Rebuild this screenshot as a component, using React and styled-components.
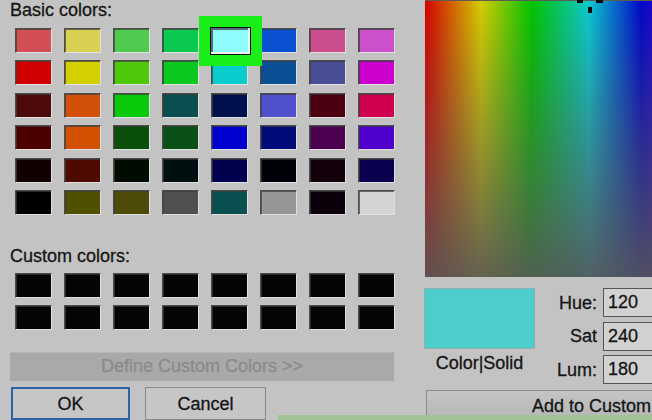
import React from 'react';
import styled, { createGlobalStyle } from 'styled-components';

const GlobalStyle = createGlobalStyle`
  *, *::before, *::after {
    box-sizing: border-box;
  }
  html, body {
    margin: 0;
    background: #c3c3c3;
    overflow: hidden;
    font-family: "Liberation Sans", Arial, sans-serif;
  }
`;

const basicColors = [
  '#d24f55', '#d8d052', '#4fca4f', '#0ac850', '#8cfcfc', '#0a50d0', '#cc4e8c', '#cc50cc',
  '#d20000', '#d4d000', '#50c80a', '#0ac81e', '#0acccc', '#0a5096', '#4a4e96', '#cc00cc',
  '#4c0a0a', '#d2500a', '#0ac80a', '#0a4e50', '#00104e', '#5050cc', '#4c0010', '#d00050',
  '#4c0000', '#d25000', '#0a500a', '#0a5014', '#0000d0', '#000a78', '#4c0050', '#5000cc',
  '#120000', '#4e0a00', '#000c00', '#001010', '#00004e', '#00000a', '#12000a', '#0a0050',
  '#000000', '#505000', '#4e4a0a', '#505050', '#0a5050', '#969696', '#0c000a', '#d4d4d4',
];

const SELECTED = 4;

const Page = styled.div`
  position: relative;
  display: flex;
  width: 652px;
  height: 420px;
  overflow: hidden;
  color: #151515;
  -webkit-text-stroke: 0.3px currentColor;
`;

const LeftPane = styled.div`
  flex: 0 0 420px;
  display: flex;
  flex-direction: column;
  padding-left: 10px;
`;

const Heading = styled.h2`
  margin: ${(p) => p.$top || 0}px 0 0 0;
  font-size: 18px;
  line-height: 20px;
  font-weight: normal;
`;

const SwatchGrid = styled.div`
  display: grid;
  grid-template-columns: repeat(8, 37px);
  grid-auto-rows: 25px;
  column-gap: 12px;
  row-gap: ${(p) => p.$gap}px;
  margin: ${(p) => p.$top}px 0 0 5px;
`;

const Swatch = styled.div`
  background: ${(p) => p.$color};
  border: 1px solid;
  border-color: #4c4c4c #e0e0e0 #e0e0e0 #4c4c4c;
  box-shadow: inset 1px 1px 0 rgba(60, 60, 60, 0.7);

  ${(p) =>
    p.$selected &&
    `
    position: relative;
    z-index: 1;
    margin: -1px -3px -2px -1px;
    border: 1px solid #0c0c0c;
    box-shadow: inset -2px -2px 0 #f2f2f2, inset 2px 2px 0 #4f7070, 0 0 0 11px #19ee19;
  `}
`;

const DefineButton = styled.div`
  display: flex;
  align-items: center;
  justify-content: center;
  width: 384px;
  height: 31px;
  margin-top: 21.5px;
  background: #a9a9a9;
  box-shadow: inset 0 1px 0 #b6b6b6;
  color: #8b8b8b;
  font-size: 18px;
  line-height: 20px;
`;

const ButtonRow = styled.div`
  display: flex;
  gap: 15px;
  margin: 6px 0 0 1px;
`;

const DialogButton = styled.div`
  display: flex;
  align-items: center;
  justify-content: center;
  flex: 0 0 ${(p) => p.$width}px;
  height: 33px;
  background: #c6c6c6;
  border: ${(p) => (p.$default ? '2px solid #2d62a6' : '1px solid #8a8a8a')};
  font-size: 18px;
  line-height: 20px;
`;

const RightPane = styled.div`
  flex: 0 0 232px;
  display: flex;
  flex-direction: column;
  padding-left: 4px;
  overflow: hidden;
`;

const Spectrum = styled.div`
  position: relative;
  flex: 0 0 277px;
  width: 240px;
  margin-left: 1px;
  border-top: 1px solid #5c5c50;
  background:
    linear-gradient(to bottom, rgba(88, 86, 88, 0) 0%, rgba(88, 86, 88, 0.9) 100%),
    linear-gradient(
      to right,
      #d40000 0px,
      #d4cc00 56px,
      #00c400 107px,
      #0ac8d0 164px,
      #0008c8 216px,
      #4400c8 245px
    );
`;

const CrossMark = styled.span`
  position: absolute;
  left: ${(p) => p.$x}px;
  top: ${(p) => p.$y}px;
  width: ${(p) => p.$w}px;
  height: ${(p) => p.$h}px;
  background: #0a0a0a;
`;

const InfoRow = styled.div`
  display: flex;
  margin-top: 11px;
`;

const PreviewCol = styled.div`
  flex: 0 0 111px;
  display: flex;
  flex-direction: column;
`;

const PreviewBox = styled.div`
  height: 61px;
  background: #4ecdcd;
  border: 1px solid #8cb0b0;
`;

const PreviewLabel = styled.div`
  margin-top: 3.5px;
  text-align: center;
  font-size: 18px;
  line-height: 20px;
`;

const Fields = styled.div`
  display: flex;
  flex-direction: column;
  gap: 4.5px;
  margin-left: 5px;
`;

const FieldRow = styled.div`
  display: flex;
  align-items: center;
  height: 29px;
`;

const FieldLabel = styled.label`
  flex: 0 0 57px;
  text-align: right;
  font-size: 18px;
  line-height: 20px;
`;

const FieldInput = styled.input`
  flex: 0 0 60px;
  width: 60px;
  height: 29px;
  margin: 0 0 0 6px;
  padding: 0 0 0 4px;
  border: 1px solid #555;
  background: #d2d2d2;
  color: #151515;
  font-family: inherit;
  font-size: 18px;
  outline: none;
  -webkit-text-stroke: 0.3px currentColor;
`;

const AddButton = styled.div`
  display: flex;
  align-items: center;
  justify-content: center;
  flex: 0 0 32px;
  width: 388px;
  margin: 6px 0 0 2px;
  background: linear-gradient(#c4c4c4, #b6b6b6);
  border: 1px solid #8a8a8a;
  font-size: 18px;
  line-height: 20px;
  white-space: nowrap;
`;

const TaskStrip = styled.div`
  position: absolute;
  left: 278px;
  right: 0;
  bottom: 0;
  height: 5px;
  background: #a2c293;
`;

const fields = [
  ['Hue:', '120'],
  ['Sat', '240'],
  ['Lum:', '180'],
];

export default function App() {
  return (
    <>
      <GlobalStyle />
      <Page>
        <LeftPane>
          <Heading>Basic colors:</Heading>
          <SwatchGrid $gap={7.4} $top={8}>
            {basicColors.map((c, i) => (
              <Swatch key={i} $color={c} $selected={i === SELECTED} />
            ))}
          </SwatchGrid>

          <Heading $top={31.5}>Custom colors:</Heading>
          <SwatchGrid $gap={7} $top={7}>
            {Array.from({ length: 16 }, (_, i) => (
              <Swatch key={i} $color="#050505" />
            ))}
          </SwatchGrid>

          <DefineButton>Define Custom Colors &gt;&gt;</DefineButton>

          <ButtonRow>
            <DialogButton $default $width={119}>OK</DialogButton>
            <DialogButton $width={121}>Cancel</DialogButton>
          </ButtonRow>
        </LeftPane>

        <RightPane>
          <Spectrum>
            {/* crosshair marker, mostly above the visible edge */}
            <CrossMark $x={152} $y={-1} $w={6} $h={3} />
            <CrossMark $x={171} $y={-1} $w={7} $h={3} />
            <CrossMark $x={163} $y={6} $w={4} $h={6} />
          </Spectrum>

          <InfoRow>
            <PreviewCol>
              <PreviewBox />
              <PreviewLabel>Color|Solid</PreviewLabel>
            </PreviewCol>
            <Fields>
              {fields.map(([label, value]) => (
                <FieldRow key={label}>
                  <FieldLabel>{label}</FieldLabel>
                  <FieldInput readOnly value={value} />
                </FieldRow>
              ))}
            </Fields>
          </InfoRow>

          <AddButton>Add to Custom Colors</AddButton>
        </RightPane>

        <TaskStrip />
      </Page>
    </>
  );
}
